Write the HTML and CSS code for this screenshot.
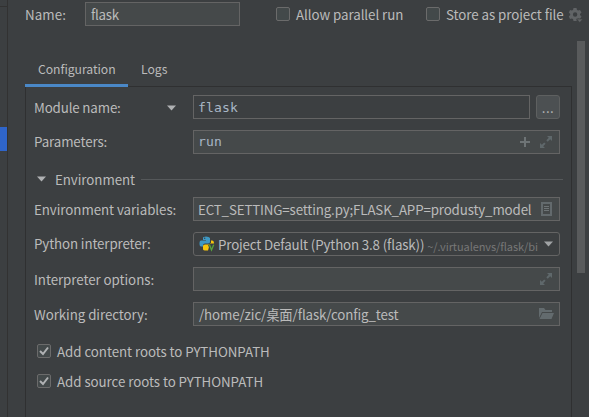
FILE: index.html
```html
<!DOCTYPE html>
<html lang="en">
<head>
<meta charset="utf-8">
<title>Run Configuration</title>
<link rel="stylesheet" href="styles.css">
</head>
<body>
<div class="window">
  <aside class="sidebar"><div class="sidebar-top"></div><div class="selection"></div></aside>
  <main class="main">
    <header class="header">
      <span class="name-label">Name:</span>
      <div class="field name-field"><span>flask</span></div>
      <span class="box parallel"></span><span class="box-label parallel-label">Allow parallel run</span>
      <span class="box store"></span><span class="box-label">Store as project file</span>
      <svg class="gear" width="15" height="15" viewBox="0 0 15 15"><path fill="#616466" fill-rule="evenodd" d="M4.500 0h3l.5 2 1.200.6 1.800-.6L12.500 4.500 11 5.900v1.200L12.500 8.500 11 11l-1.800-.5-1.200.6L7.500 13h-3L4 11.100l-1.200-.6L1 11 -.2 8.500 1.200 7.100V5.900L-.2 4.500 1 2l1.800.6L4 2zM6.100 4.300a2.200 2.200 0 1 0 0 4.400a2.200 2.200 0 1 0 0-4.400z"/><path fill="#616466" stroke="#3c3f41" stroke-width=".7" d="M7.500 11h6.500l-3.200 3.600z"/></svg>
    </header>
    <div class="body">
      <div class="content">
        <nav class="tabs"><div class="tab active">Configuration</div><div class="tab">Logs</div></nav>
        <section class="panel">
          <div class="row">
            <div class="label with-arrow"><span>Module name:</span><svg width="10" height="6" viewBox="0 0 10 6"><path fill="#afb1b3" d="M0 .5h9L4.500 5.500z"/></svg></div>
            <div class="field module mono"><span>flask</span></div><div class="browse">...</div>
          </div>
          <div class="row">
            <div class="label raised">Parameters:</div>
            <div class="field grow mono"><span>run</span>
              <svg class="icons" width="34" height="14" viewBox="0 0 34 14"><path fill="#6e7476" d="M5 2h2v4h4v2H7v4H5V8H1V6h4z"/><path fill="#5f686b" d="M28 1h5v5l-1.800-1.800-2.500 2.500-1.400-1.400L29.800 2.800zM21 13V8l1.800 1.800L25.200 7.400l1.400 1.400-2.400 2.400L26 13z"/></svg></div>
          </div>
          <div class="separator"><svg width="10" height="6" viewBox="0 0 10 6"><path fill="#afb1b3" d="M0 .5h9L4.500 5.500z"/></svg><span>Environment</span><i></i></div>
          <div class="row">
            <div class="label">Environment variables:</div>
            <div class="field grow"><span class="t-env">ECT_SETTING=setting.py;FLASK_APP=produsty_model</span>
              <svg class="list" width="11" height="14" viewBox="0 0 11 14"><path fill="none" stroke="#636a6d" stroke-width="2" d="M1 1h9v12H1z"/><path stroke="#6e7476" d="M3 4.500h5M3 6.500h5M3 8.500h5"/></svg></div>
          </div>
          <div class="row">
            <div class="label raised">Python interpreter:</div>
            <div class="field grow combo">
              <svg class="python" width="16" height="16" viewBox="0 0 16 16"><path fill="#3e98c4" d="M4 2Q4 .5 7 .5t4 1.500v4Q11 7.500 9 7.500H6Q4 7.500 4 9.500v1H2Q.5 10.500.5 7.500T2 4.500h5V4H4z"/><circle cx="5.700" cy="2.300" r=".7" fill="#3c3f41"/><path fill="#f5c50c" d="M12 4.500h1q2 0 2 3H11L9 14.500Q4 15 4 13V10q0-1.500 2-1.500h3.500Q12 8.500 12 6.500z"/><path fill="none" stroke="#3c3f41" stroke-width="3" d="M10.500 8.500l2.100 6L14.700 8.500"/><path fill="none" stroke="#56a63c" stroke-width="1.300" d="M10.500 8.800l2 5.200L14.700 8.800"/></svg>
              <span class="t-project">Project Default (Python 3.8 (flask))</span><span class="path">~/.virtualenvs/flask/bi</span>
              <svg class="drop" width="10" height="6" viewBox="0 0 10 6"><path fill="#a0a3a5" d="M0 .5h9L4.500 5.500z"/></svg></div>
          </div>
          <div class="row">
            <div class="label">Interpreter options:</div>
            <div class="field grow"><svg class="icons" width="34" height="14" viewBox="0 0 34 14"><path fill="#5f686b" d="M28 1h5v5l-1.800-1.800-2.500 2.500-1.400-1.400L29.800 2.800zM21 13V8l1.800 1.800L25.200 7.400l1.400 1.400-2.400 2.400L26 13z"/></svg></div>
          </div>
          <div class="row">
            <div class="label">Working directory:</div>
            <div class="field grow"><span class="t-dir">/home/zic/桌面/flask/config_test</span>
              <svg class="folder" width="15" height="12" viewBox="0 0 15 12"><path fill="#636b6e" d="M0 0h5l1.500 2H13v2H3L0 10zM3.500 5H15l-2.500 6H.5z"/></svg></div>
          </div>
          <div class="checks">
            <div class="check"><span class="box"><svg width="12" height="12" viewBox="0 0 12 12"><path fill="none" stroke="#afb1b3" stroke-width="2" d="M2 6L5 9L10 2.500"/></svg></span><span>Add content roots to PYTHONPATH</span></div>
            <div class="check"><span class="box"><svg width="12" height="12" viewBox="0 0 12 12"><path fill="none" stroke="#afb1b3" stroke-width="2" d="M2 6L5 9L10 2.500"/></svg></span><span>Add source roots to PYTHONPATH</span></div>
          </div>
        </section>
      </div>
      <div class="scrollbar"></div>
    </div>
  </main>
</div>
</body>
</html>
```
FILE: styles.css
```css
* { box-sizing: border-box; }
body {
  margin: 0;
  overflow: hidden;
  background: #3c3f41;
  color: #bbbbbb;
  font: 13.33px/20px "Noto Sans CJK SC", "Noto Sans", sans-serif;
  letter-spacing: -.06px;
  white-space: nowrap;
}
svg { display: block; flex: none; }
.window { display: flex; height: 417px; overflow: hidden; }
.sidebar { width: 8px; flex: none; border-right: 1px solid #323232; }
.sidebar-top { height: 7px; border-bottom: 1px solid #323232; }
.selection { height: 24px; margin-top: 120px; background: #2f65ca; }
.main { flex: 1; min-width: 0; padding: 2px 0 0 17px; }
.header { display: flex; height: 39px; align-items: flex-start; }
.name-label { width: 60px; margin-top: 3px; flex: none; letter-spacing: .1px; }
.field {
  display: flex;
  align-items: center;
  height: 24px;
  padding: 0 5px 0 4px;
  border: 1px solid #646464;
  background: #45494a;
  flex: none;
}
.name-field { width: 155px; padding: 2px 0 0 5px; letter-spacing: -.3px; }
.box {
  width: 14px;
  height: 14px;
  flex: none;
  border: 1px solid #6b6b6b;
  border-radius: 2px;
  background: #43494a;
}
.header .box { margin-top: 5px; }
.parallel { margin-left: 36px; }
.box-label { margin: 3px 0 0 6px; flex: none; }
.parallel-label { width: 130px; }
.box-label:nth-last-child(2) { width: 118px; }
.gear { margin: 6px 0 0 5px; overflow: visible; }
.body { display: flex; height: 376px; }
.content { width: 547px; flex: none; padding-top: 18px; }
.tabs { display: flex; height: 28px; border-bottom: 1px solid #2f3031; font-size: 12.2px; letter-spacing: -.03px; }
.tab { height: 28px; padding: 0 13px; line-height: 21px; flex: none; }
.active { width: 103px; border-bottom: 3px solid #4a88c7; }
.panel { height: 335px; padding: 8px 11px 0 8px; border: 1px solid #2f3031; border-width: 0 1px; }
.row { display: flex; height: 24px; margin-bottom: 11px; align-items: center; }
.label { width: 159px; flex: none; padding-top: 1px; }
.label.raised { padding: 0 0 1px; letter-spacing: -.12px; }
.with-arrow { display: flex; align-items: center; justify-content: space-between; padding-right: 16px; letter-spacing: -.15px; }
.with-arrow span { padding-top: 1px; }
.grow { flex: 1; min-width: 0; }
.mono { font-family: "DejaVu Sans Mono", monospace; font-size: 13px; letter-spacing: .17px; color: #a9b7c6; }
.module { width: 337px; background: #3c3f41; padding-top: 1px; }
.browse {
  width: 24px;
  height: 24px;
  margin-left: 6px;
  border: 1px solid #5e6060;
  border-radius: 3px;
  background: #4c5052;
  text-align: center;
  line-height: 24px;
  letter-spacing: .4px;
}
.icons, .list, .folder, .drop { margin-left: auto; }
.icons { margin-right: 1px; }
.list { margin-right: 2px; }
.t-env { padding-top: 2px; letter-spacing: -.15px; }
.t-dir { padding: 2px 0 0 1px; letter-spacing: -.12px; }
.t-project { padding-top: 2px; letter-spacing: -.15px; }
.separator { display: flex; height: 20px; margin: 15px -3px 8px 3px; align-items: center; }
.separator span { margin-left: 8px; width: 86px; flex: none; padding-top: 1px; }
.separator i { flex: 1; height: 1px; background: #55585a; }
.combo { border-radius: 3px; background: #3c3f41; }
.python { margin-left: 1px; margin-right: 3px; }
.path { margin-left: 3px; padding-top: 3px; color: #777777; font-size: 11px; letter-spacing: -.08px; }
.checks { padding: 1px 0 0 3px; }
.check { display: flex; height: 20px; margin: 4px 0 10px; align-items: center; }
.check .box { margin: -2px 6px 0 0; }
.scrollbar { width: 8px; height: 232px; margin-left: 5px; background: #595b5c; }
```
